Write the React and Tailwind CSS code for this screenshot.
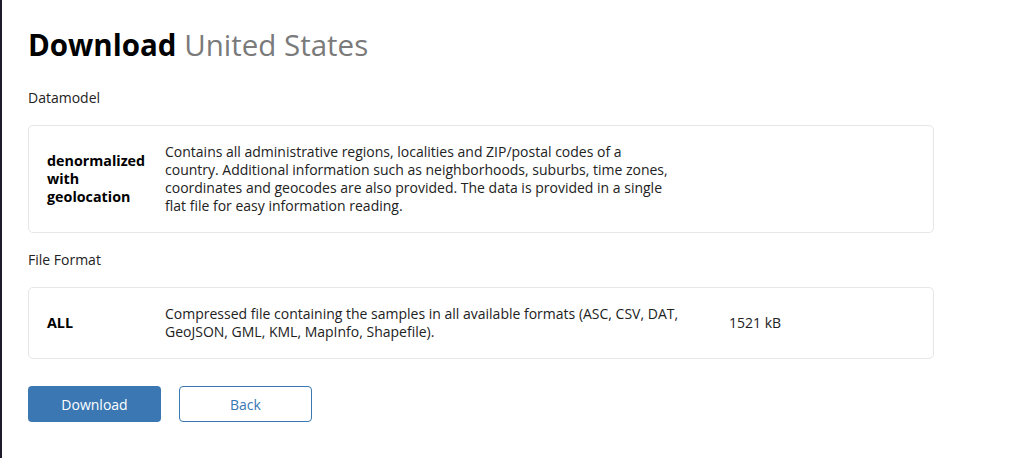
import React from "react";

function Card({ label, children, size, h }) {
  return (
    <div className={`flex ${h} items-center rounded-[5px] border border-[#e6e6e6] bg-white pl-[18px] pr-4`}>
      <div className="w-[118px] shrink-0 text-[14.3px] font-bold leading-[18px] text-black">{label}</div>
      <div className="w-[540px] shrink-0 whitespace-nowrap text-[14px] leading-[18px] text-[#222]">{children}</div>
      {size && <div className="ml-[24px] text-[14px] leading-[18px] text-[#222]">{size}</div>}
    </div>
  );
}

export default function App() {
  return (
    <div className="min-h-[458px] w-[1024px] border-l-2 border-[#1c1b2b] bg-white font-['Open_Sans',sans-serif]">
      <div className="w-[932px] pl-[26px] pt-[26px]">
        <h1 className="text-[29.5px] leading-[38px]">
          <span className="font-bold text-black">Download</span>{" "}
          <span className="font-normal text-[#7a7a7a]">United States</span>
        </h1>

        <div className="mt-[25px] text-[14px] leading-[18px] text-[#222]">Datamodel</div>
        <div className="mt-[18px]">
          <Card h="h-[108px]" label={<>denormalized<br />with<br />geolocation</>}>
            Contains all administrative regions, localities and ZIP/postal codes of a<br />
            country. Additional information such as neighborhoods, suburbs, time zones,<br />
            coordinates and geocodes are also provided. The data is provided in a single<br />
            flat file for easy information reading.
          </Card>
        </div>

        <div className="mt-[18px] text-[14px] leading-[18px] text-[#222]">File Format</div>
        <div className="mt-[18px]">
          <Card h="h-[72px]" label="ALL" size="1521 kB">
            Compressed file containing the samples in all available formats (ASC, CSV, DAT,<br />
            GeoJSON, GML, KML, MapInfo, Shapefile).
          </Card>
        </div>

        <div className="mt-[27px] flex gap-[18px]">
          <button className="h-[36px] w-[133px] rounded-[4px] bg-[#3a77b3] text-[14px] text-white">Download</button>
          <button className="h-[36px] w-[133px] rounded-[4px] border border-[#3a77b3] bg-white text-[14px] text-[#3a77b3]">Back</button>
        </div>
      </div>
    </div>
  );
}
